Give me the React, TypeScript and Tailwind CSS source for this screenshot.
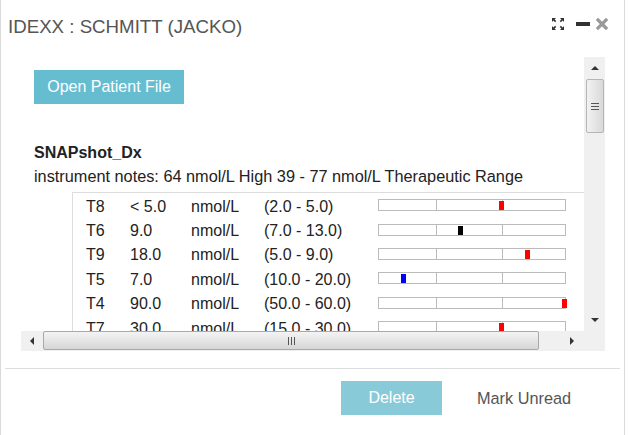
import React from 'react';

type Row = { name: string; value: string; unit: string; range: string; pos: number; color: string };

const rows: Row[] = [
  { name: 'T8', value: '< 5.0', unit: 'nmol/L', range: '(2.0 - 5.0)', pos: 121, color: 'bg-[#ff0000]' },
  { name: 'T6', value: '9.0', unit: 'nmol/L', range: '(7.0 - 13.0)', pos: 80, color: 'bg-black' },
  { name: 'T9', value: '18.0', unit: 'nmol/L', range: '(5.0 - 9.0)', pos: 147, color: 'bg-[#ff0000]' },
  { name: 'T5', value: '7.0', unit: 'nmol/L', range: '(10.0 - 20.0)', pos: 23, color: 'bg-[#0000ff]' },
  { name: 'T4', value: '90.0', unit: 'nmol/L', range: '(50.0 - 60.0)', pos: 184, color: 'bg-[#ff0000]' },
  { name: 'T7', value: '30.0', unit: 'nmol/L', range: '(15.0 - 30.0)', pos: 121, color: 'bg-[#ff0000]' },
];

const RangeBar: React.FC<{ pos: number; color: string }> = ({ pos, color }) => (
  <div className="relative flex h-[12px] w-[188px] border border-[#bbbbbb] bg-white">
    <div className="w-[58px] border-r border-[#bbbbbb]" />
    <div className="w-[66px] border-r border-[#bbbbbb]" />
    <div className="flex-1" />
    {/* marker: place comes from the result */}
    <div className={`absolute top-[1px] h-[9px] w-[5px] ${color}`} style={{ left: pos - 1 }} />
  </div>
);

const Grip: React.FC<{ vertical?: boolean }> = ({ vertical }) =>
  vertical ? (
    <div className="flex flex-col gap-[2px]">
      <div className="h-[1px] w-[8px] bg-[#555]" />
      <div className="h-[1px] w-[8px] bg-[#555]" />
      <div className="h-[1px] w-[8px] bg-[#555]" />
    </div>
  ) : (
    <div className="flex gap-[2px]">
      <div className="h-[8px] w-[1px] bg-[#555]" />
      <div className="h-[8px] w-[1px] bg-[#555]" />
      <div className="h-[8px] w-[1px] bg-[#555]" />
    </div>
  );

const App: React.FC = () => {
  return (
    <div className="h-[435px] w-[628px] overflow-hidden bg-white" style={{ fontFamily: '"Liberation Sans", Arial, sans-serif' }}>
      <div className="flex h-full w-[625px] flex-col border-x border-[#d9d9d9]">
        {/* HEADER */}
        <div className="flex items-start justify-between pl-[7px] pr-[16px] pt-[15px]">
          <h1 className="text-[18.7px] leading-[24px] text-[#555555]">IDEXX : SCHMITT (JACKO)</h1>
          <div className="flex items-center gap-[6px] pt-[3px]">
            <svg width="12" height="12" viewBox="0 0 12 12" className="mr-[6px]">
              <g fill="#333">
                <path d="M0 0h4L2.6 1.4 4.3 3.1 3.1 4.3 1.4 2.6 0 4z" />
                <path d="M12 0v4L10.6 2.6 8.9 4.3 7.7 3.1 9.4 1.4 8 0z" />
                <path d="M0 12V8l1.4 1.4 1.7-1.7 1.2 1.2-1.7 1.7L4 12z" />
                <path d="M12 12H8l1.4-1.4-1.7-1.7 1.2-1.2 1.7 1.7L12 8z" />
              </g>
            </svg>
            <div className="h-[4px] w-[14px] bg-[#333333]" />
            <svg width="12" height="12" viewBox="0 0 12 12">
              <path d="M2 2L10 10M10 2L2 10" stroke="#9a9a9a" strokeWidth="3.2" strokeLinecap="square" />
            </svg>
          </div>
        </div>

        {/* SCROLL AREA */}
        <div className="ml-[20px] mt-[18px] flex w-[584px] flex-col">
          <div className="flex h-[274px]">
            <div className="w-[563px] overflow-hidden pl-[13px] pt-[13px]">
              <button className="h-[34px] w-[150px] bg-[#66bdd0] text-[16px] text-white">Open Patient File</button>
              <div className="mt-[37px] text-[16px] font-bold leading-[23px] text-[#222]">SNAPshot_Dx</div>
              <div className="whitespace-nowrap pt-[1px] text-[16.3px] leading-[23px] text-[#222]">
                instrument notes: 64 nmol/L High 39 - 77 nmol/L Therapeutic Range
              </div>
              <div className="ml-[38px] mt-[4px] w-[560px] border-l border-t border-[#dddddd] pl-[13px] text-[16px] text-[#222]">
                {rows.map((r) => (
                  <div key={r.name} className="flex h-[24.4px] items-center whitespace-nowrap">
                    <span className="w-[44px] pt-[3px]">{r.name}</span>
                    <span className="w-[61px] pt-[3px]">{r.value}</span>
                    <span className="w-[73px] pt-[3px]">{r.unit}</span>
                    <span className="w-[114px] pt-[3px]">{r.range}</span>
                    <RangeBar pos={r.pos} color={r.color} />
                  </div>
                ))}
              </div>
            </div>
            {/* vertical scrollbar */}
            <div className="flex w-[21px] flex-col items-center bg-[#f0f0f0]">
              <div className="flex h-[22px] w-full items-center justify-center">
                <div className="h-0 w-0 border-x-[4px] border-b-[4px] border-x-transparent border-b-[#333]" />
              </div>
              <div className="flex h-[54px] w-[18px] items-center justify-center rounded-[2px] border border-[#b5b5b5] bg-gradient-to-r from-[#f2f2f2] to-[#d9d9d9]">
                <Grip vertical />
              </div>
              <div className="flex-1" />
              <div className="flex h-[22px] w-full items-center justify-center">
                <div className="h-0 w-0 border-x-[4px] border-t-[4px] border-x-transparent border-t-[#333]" />
              </div>
            </div>
          </div>
          {/* horizontal scrollbar */}
          <div className="flex h-[20px] bg-[#f0f0f0]">
            <div className="flex w-[22px] items-center justify-center">
              <div className="h-0 w-0 border-y-[4px] border-r-[4px] border-y-transparent border-r-[#333]" />
            </div>
            <div className="flex h-[19px] w-[496px] items-center justify-center rounded-[2px] border border-[#a9a9a9] bg-gradient-to-b from-[#f4f4f4] to-[#d6d6d6]">
              <Grip />
            </div>
            <div className="w-[22px]" />
            <div className="flex w-[22px] items-center justify-center">
              <div className="h-0 w-0 border-y-[4px] border-l-[4px] border-y-transparent border-l-[#333]" />
            </div>
            <div className="flex-1" />
          </div>
        </div>

        {/* FOOTER */}
        <div className="mx-[4px] mt-[17px] border-t border-[#dddddd]" />
        <div className="flex items-center pt-[12px]">
          <button className="ml-[340px] h-[34px] w-[101px] bg-[#89cad9] text-[16px] text-white">Delete</button>
          <span className="ml-[35px] text-[16.3px] text-[#555555]">Mark Unread</span>
        </div>
      </div>
    </div>
  );
};

export default App;
